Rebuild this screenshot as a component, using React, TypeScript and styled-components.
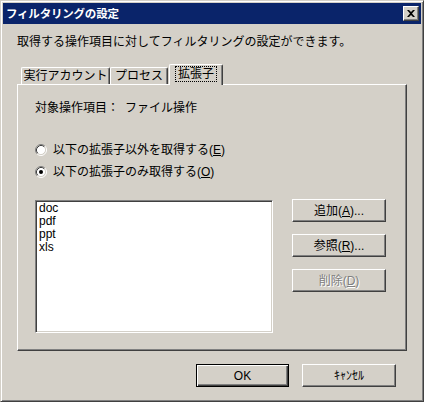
import React from "react";
import styled, { createGlobalStyle } from "styled-components";

const GlobalStyle = createGlobalStyle`
  html, body { margin: 0; padding: 0; background: #ffffff; }
  body {
    font-family: "Liberation Sans", "Noto Sans CJK JP", sans-serif;
    font-size: 12px;
    color: #000;
  }
`;

const FONT = `"Liberation Sans", "Noto Sans CJK JP", sans-serif`;

const Dialog = styled.div`
  width: 424px;
  height: 402px;
  box-sizing: border-box;
  background: #d4d0c8;
  border: 1px solid;
  border-color: #d4d0c8 #404040 #404040 #d4d0c8;
  box-shadow: inset 1px 1px #ffffff, inset -1px -1px #808080;
  padding: 2px;
  display: flex;
  flex-direction: column;
  font-family: ${FONT};
`;

const TitleBar = styled.div`
  height: 21px;
  background: #0a246a;
  display: flex;
  align-items: center;
  justify-content: space-between;
  padding: 0 2px 0 3px;
`;

const TitleText = styled.span`
  color: #ffffff;
  font-weight: bold;
  font-size: 11.5px;
  line-height: 14px;
  letter-spacing: -0.2px;
`;

const CloseButton = styled.div`
  width: 16px;
  height: 15px;
  box-sizing: border-box;
  background: #d4d0c8;
  border: 1px solid;
  border-color: #ffffff #404040 #404040 #ffffff;
  box-shadow: inset -1px -1px #808080;
  display: flex;
  align-items: center;
  justify-content: center;
`;

const Body = styled.div`
  flex: 1;
  display: flex;
  flex-direction: column;
  padding: 11px 14px 0 14px;
`;

const Description = styled.div`
  font-size: 12px;
  line-height: 14px;
  white-space: nowrap;
`;

const TabStrip = styled.div`
  margin-top: 15px;
  height: 20px;
  display: flex;
  align-items: flex-end;
  padding-left: 4px;
`;

const Tab = styled.div<{ $selected?: boolean; $w: number }>`
  width: ${(p) => p.$w}px;
  height: ${(p) => (p.$selected ? 21 : 17)}px;
  box-sizing: border-box;
  margin-left: ${(p) => (p.$selected ? 1 : 0)}px;
  margin-bottom: ${(p) => (p.$selected ? -1 : 0)}px;
  position: relative;
  z-index: ${(p) => (p.$selected ? 2 : 1)};
  background: #d4d0c8;
  border-top: 1px solid #ffffff;
  border-left: 1px solid #ffffff;
  border-right: 1px solid #404040;
  box-shadow: inset -1px 0 #808080;
  border-radius: 2px 2px 0 0;
  display: flex;
  align-items: ${(p) => (p.$selected ? "flex-start" : "center")};
  justify-content: center;
  padding-top: ${(p) => (p.$selected ? 1 : 0)}px;
  font-size: 12px;
  line-height: 14px;
  white-space: nowrap;
`;

const FocusLabel = styled.span`
  border: 1px dotted #000;
  padding: 0 2px;
  line-height: 14px;
`;

const Panel = styled.div`
  width: 390px;
  height: 267px;
  box-sizing: border-box;
  border: 1px solid;
  border-color: #ffffff #404040 #404040 #ffffff;
  box-shadow: inset -1px -1px #808080;
  padding: 16px 0 0 17px;
  display: flex;
  flex-direction: column;
`;

const TargetRow = styled.div`
  display: flex;
  font-size: 12px;
  line-height: 14px;
`;

const TargetValue = styled.span`
  margin-left: 6px;
`;

const RadioGroup = styled.div`
  margin-top: 27px;
  display: flex;
  flex-direction: column;
  gap: 6px;
`;

const RadioRow = styled.label`
  height: 16px;
  display: flex;
  align-items: center;
  gap: 6px;
  padding-left: 0;
  font-size: 12px;
  line-height: 14px;
  white-space: nowrap;
`;

const ListArea = styled.div`
  margin-top: 19px;
  display: flex;
  gap: 19px;
`;

const ListBox = styled.div`
  width: 238px;
  height: 133px;
  margin-top: 1px;
  box-sizing: border-box;
  background: #ffffff;
  border: 1px solid;
  border-color: #808080 #ffffff #ffffff #808080;
  box-shadow: inset 1px 1px #404040, inset -1px -1px #d4d0c8;
  padding: 1px 2px 0 3px;
  display: flex;
  flex-direction: column;
`;

const ListItem = styled.div`
  font-family: "Liberation Sans", sans-serif;
  font-size: 12px;
  line-height: 13px;
`;

const ButtonColumn = styled.div`
  display: flex;
  flex-direction: column;
  gap: 12px;
`;

const Button = styled.div<{ $w?: number; $disabled?: boolean; $default?: boolean }>`
  width: ${(p) => p.$w ?? 94}px;
  height: 23px;
  box-sizing: border-box;
  background: #d4d0c8;
  border: 1px solid;
  border-color: ${(p) => (p.$default ? "#000" : "#ffffff #404040 #404040 #ffffff")};
  box-shadow: ${(p) =>
    p.$default
      ? "inset 1px 1px #ffffff, inset -1px -1px #404040, inset -2px -2px #808080"
      : "inset -1px -1px #808080"};
  display: flex;
  align-items: center;
  justify-content: center;
  font-size: 12px;
  line-height: 14px;
  color: ${(p) => (p.$disabled ? "#808080" : "#000")};
  text-shadow: ${(p) => (p.$disabled ? "1px 1px #ffffff" : "none")};
  white-space: nowrap;
`;

const Footer = styled.div`
  margin-top: 13px;
  display: flex;
  justify-content: flex-end;
  gap: 13px;
  padding-right: 11px;
`;

const Radio: React.FC<{ checked?: boolean }> = ({ checked }) => (
  <svg width="12" height="12" viewBox="0 0 12 12">
    <circle cx="6" cy="6" r="4.5" fill="#ffffff" />
    <path d="M2.11 9.89 A5.5 5.5 0 0 1 9.89 2.11" fill="none" stroke="#808080" strokeWidth="1" />
    <path d="M9.89 2.11 A5.5 5.5 0 0 1 2.11 9.89" fill="none" stroke="#ffffff" strokeWidth="1" />
    <path d="M2.82 9.18 A4.5 4.5 0 0 1 9.18 2.82" fill="none" stroke="#404040" strokeWidth="1" />
    <path d="M9.18 2.82 A4.5 4.5 0 0 1 2.82 9.18" fill="none" stroke="#d4d0c8" strokeWidth="1" />
    {checked && <circle cx="6" cy="6" r="2" fill="#000" />}
  </svg>
);

export default function App() {
  return (
    <>
      <GlobalStyle />
      <Dialog>
        <TitleBar>
          <TitleText>フィルタリングの設定</TitleText>
          <CloseButton>
            <svg width="8" height="7" viewBox="0 0 8 7">
              <path d="M0 0 H2 L4 2 L6 0 H8 L5 3.5 L8 7 H6 L4 5 L2 7 H0 L3 3.5 Z" fill="#000" />
            </svg>
          </CloseButton>
        </TitleBar>
        <Body>
          <Description>取得する操作項目に対してフィルタリングの設定ができます。</Description>
          <TabStrip>
            <Tab $w={89}>実行アカウント</Tab>
            <Tab $w={58}>プロセス</Tab>
            <Tab $w={54} $selected>
              <FocusLabel>拡張子</FocusLabel>
            </Tab>
          </TabStrip>
          <Panel>
            <TargetRow>
              <span>対象操作項目：</span>
              <TargetValue>ファイル操作</TargetValue>
            </TargetRow>
            <RadioGroup>
              <RadioRow>
                <Radio />
                <span>
                  以下の拡張子以外を取得する(<u>E</u>)
                </span>
              </RadioRow>
              <RadioRow>
                <Radio checked />
                <span>
                  以下の拡張子のみ取得する(<u>O</u>)
                </span>
              </RadioRow>
            </RadioGroup>
            <ListArea>
              <ListBox>
                {["doc", "pdf", "ppt", "xls"].map((ext) => (
                  <ListItem key={ext}>{ext}</ListItem>
                ))}
              </ListBox>
              <ButtonColumn>
                <Button>
                  追加(<u>A</u>)...
                </Button>
                <Button>
                  参照(<u>R</u>)...
                </Button>
                <Button $disabled>
                  削除(<u>D</u>)
                </Button>
              </ButtonColumn>
            </ListArea>
          </Panel>
          <Footer>
            <Button $w={93} $default>
              OK
            </Button>
            <Button $w={94}>ｷｬﾝｾﾙ</Button>
          </Footer>
        </Body>
      </Dialog>
    </>
  );
}
